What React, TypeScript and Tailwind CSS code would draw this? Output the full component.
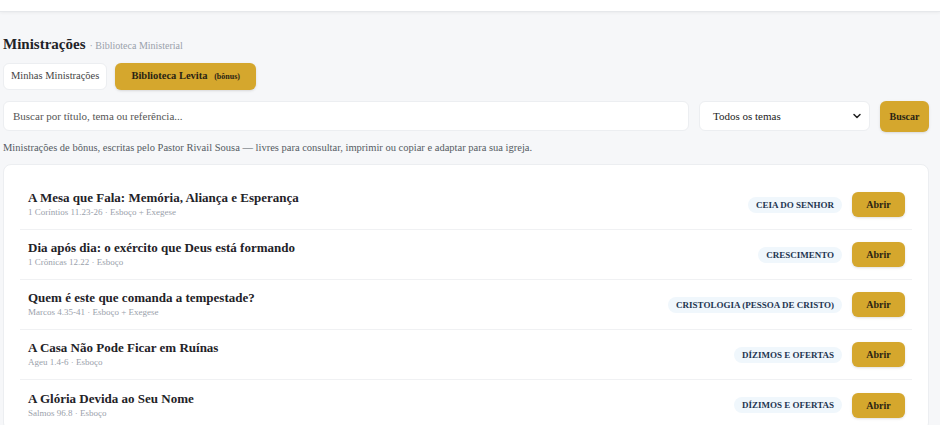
import { ChevronDown } from "lucide-react";

const items = [
  { title: "A Mesa que Fala: Memória, Aliança e Esperança", ref: "1 Coríntios 11.23-26", kind: "Esboço + Exegese", tag: "Ceia do Senhor" },
  { title: "Dia após dia: o exército que Deus está formando", ref: "1 Crônicas 12.22", kind: "Esboço", tag: "Crescimento" },
  { title: "Quem é este que comanda a tempestade?", ref: "Marcos 4.35-41", kind: "Esboço + Exegese", tag: "Cristologia (Pessoa de Cristo)" },
  { title: "A Casa Não Pode Ficar em Ruínas", ref: "Ageu 1.4-6", kind: "Esboço", tag: "Dízimos e Ofertas" },
  { title: "A Glória Devida ao Seu Nome", ref: "Salmos 96.8", kind: "Esboço", tag: "Dízimos e Ofertas" },
];

export default function App() {
  return (
    <div className="h-[425px] overflow-hidden bg-[#f6f7f9] font-['Liberation_Serif',serif] text-[#1f2328]">
      <header className="h-[12px] border-b border-[#e6e8eb] bg-white shadow-[0_1px_3px_rgba(0,0,0,0.05)]" />

      <main className="pl-[3px] pr-[11px]">
        <div className="mt-[21px] flex items-baseline gap-1">
          <h1 className="text-[15px] font-bold text-[#1f2328]">Ministrações</h1>
          <span className="text-[10px] text-[#9aa1ab]">· Biblioteca Ministerial</span>
        </div>

        <div className="mt-[7px] flex gap-2">
          <button className="h-[27px] rounded-md border border-[#eceef1] bg-white px-[7px] text-[10.5px] text-[#444]">
            Minhas Ministrações
          </button>
          <button className="h-[27px] rounded-md bg-[#d5a72d] px-4 text-[10.5px] font-bold text-[#2a2414] shadow-sm">
            Biblioteca Levita <span className="ml-1 text-[8px]">(bônus)</span>
          </button>
        </div>

        <div className="mt-[11px] flex items-center gap-[10px]">
          <div className="flex h-[30px] flex-1 items-center rounded-md border border-[#eceef1] bg-white px-[9px] text-[11px] text-[#555]">
            Buscar por título, tema ou referência...
          </div>
          <div className="flex h-[30px] w-[171px] items-center justify-between rounded-md border border-[#eceef1] bg-white pl-[13px] pr-[6px] text-[11px] text-[#222]">
            <span>Todos os temas</span>
            <ChevronDown className="h-3 w-3" strokeWidth={3} />
          </div>
          <button className="h-[31px] w-[49px] rounded-md bg-[#d5a72d] text-[10px] font-bold text-[#2a2414] shadow-sm">
            Buscar
          </button>
        </div>

        <p className="mt-[8px] text-[10.5px] text-[#555b63]">
          Ministrações de bônus, escritas pelo Pastor Rivail Sousa — livres para consultar, imprimir ou copiar e adaptar para sua igreja.
        </p>

        <section className="mt-[9px] rounded-lg border border-[#eceef1] bg-white px-[16px] pt-[15px]">
          {items.map((it, i) => (
            <div
              key={i}
              className={`flex h-[50px] items-center justify-between pl-[8px] pr-[7px] ${i < items.length - 1 ? "border-b border-[#f0f1f3]" : ""}`}
            >
              <div className="flex flex-col">
                <span className="text-[13px] font-bold leading-[16px] text-[#1f2328]">{it.title}</span>
                <span className="text-[9px] leading-[13px] text-[#9aa1ab]">
                  {it.ref} · {it.kind}
                </span>
              </div>
              <div className="flex items-center gap-[10px]">
                <span className="rounded-full bg-[#f0f7fc] px-[8px] py-[3px] text-[9px] font-bold uppercase leading-[10px] text-[#1e3550]">
                  {it.tag}
                </span>
                <button className="h-[25px] w-[53px] rounded-md bg-[#d5a72d] text-[10px] font-bold text-[#2a2414] shadow-sm">
                  Abrir
                </button>
              </div>
            </div>
          ))}
        </section>
      </main>
    </div>
  );
}
